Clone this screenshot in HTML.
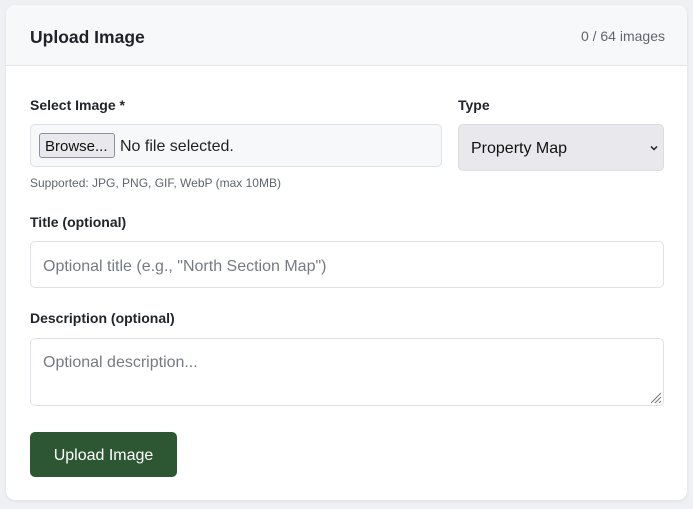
<!DOCTYPE html>
<html><head><style>
*{box-sizing:border-box;margin:0;padding:0}
body{width:693px;height:509px;background:#eef0f3;font-family:"Liberation Sans",sans-serif;position:relative;overflow:hidden;color:#212529}
.card{position:absolute;left:6px;top:5px;width:681px;height:495px;background:#fff;border-radius:9px;box-shadow:0 1px 3px rgba(0,0,0,.08);overflow:hidden}
.hdr{position:absolute;left:0;top:0;width:100%;height:61px;background:#f7f8fa;border-bottom:1px solid #e3e5e8}
.a{position:absolute;white-space:nowrap}
.lbl{font-weight:bold;font-size:14px;color:#212529}
.box{position:absolute;border:1px solid #dee2e6;border-radius:5px;background:#fff}
.ph{color:#757b82;font-size:16px}
</style></head><body>
<div class="card">
<div class="hdr"></div>
<div class="a" style="left:24px;top:22px;font-weight:bold;font-size:17.5px;color:#1f2328">Upload Image</div>
<div class="a" style="right:22px;top:23px;font-size:14px;color:#5f656c">0 / 64 images</div>
<div class="a lbl" style="left:24px;top:92px">Select Image *</div>
<div class="a lbl" style="left:452px;top:92px">Type</div>
<div class="box" style="left:24px;top:119px;width:412px;height:43px;background:#f7f8fa"></div>
<div class="a" style="left:33px;top:128px;width:76px;height:25px;border:1px solid #8f8f9d;border-radius:3px;background:#e9e9ed;font-size:15px;padding:4px 0 0 5px;color:#111">Browse...</div>
<div class="a" style="left:114px;top:133px;font-size:16px;color:#222">No file selected.</div>
<div class="box" style="left:452px;top:119px;width:206px;height:47px;background:#e9e9ed;border-color:#dcdce0"></div>
<div class="a" style="left:465px;top:135px;font-size:16px;color:#111">Property Map</div>
<svg class="a" style="left:643px;top:139px" width="10" height="8" viewBox="0 0 10 8"><path d="M2 2.5L5 5.5L8 2.5" fill="none" stroke="#222" stroke-width="1.5"/></svg>
<div class="a" style="left:24px;top:171px;font-size:12px;color:#5f656c">Supported: JPG, PNG, GIF, WebP (max 10MB)</div>
<div class="a lbl" style="left:24px;top:209px">Title (optional)</div>
<div class="box" style="left:24px;top:236px;width:634px;height:47px"></div>
<div class="a ph" style="left:37px;top:253px">Optional title (e.g., "North Section Map")</div>
<div class="a lbl" style="left:24px;top:305px">Description (optional)</div>
<div class="box" style="left:24px;top:333px;width:634px;height:68px"></div>
<div class="a ph" style="left:37px;top:349px">Optional description...</div>
<svg class="a" style="left:642px;top:385px" width="14" height="14" viewBox="0 0 14 14"><path d="M13 3L3 13M13 7L7 13M13 11L11 13" stroke="#777" stroke-width="1"/></svg>
<div class="a" style="left:24px;top:427px;width:147px;height:45px;background:#2d5732;border-radius:5px;color:#fff;font-size:16px;text-align:center;line-height:47px">Upload Image</div>
</div>
</body></html>
